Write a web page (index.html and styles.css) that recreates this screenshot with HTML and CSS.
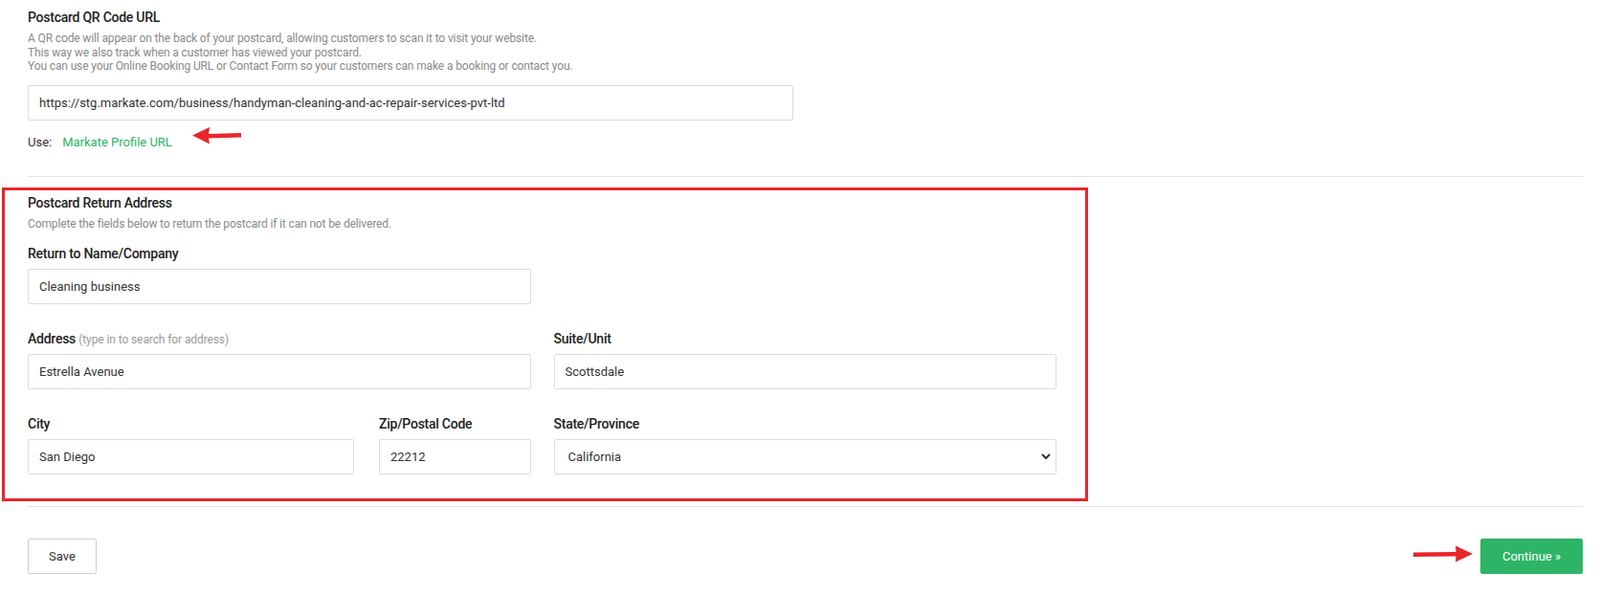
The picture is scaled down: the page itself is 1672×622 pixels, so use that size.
FILE: index.html
```html
<!DOCTYPE html>
<html lang="en">
<head>
<meta charset="utf-8">
<title>Postcard settings</title>
<link rel="stylesheet" href="styles.css">
</head>
<body>
<div class="page">
  <section class="qr">
    <div class="title">Postcard QR Code URL</div>
    <p class="desc">A QR code will appear on the back of your postcard, allowing customers to scan it to visit your website.<br>This way we also track when a customer has viewed your postcard.<br>You can use your Online Booking URL or Contact Form so your customers can make a booking or contact you.</p>
    <input class="field field-wide" type="text" value="https://stg.markate.com/business/handyman-cleaning-and-ac-repair-services-pvt-ltd">
    <div class="use">
      <span class="use-label">Use:</span>
      <a class="link" href="#">Markate Profile URL</a>
      <svg class="arrow arrow-left" width="52" height="20" viewBox="0 0 52 20"><path d="M0 9.5 L18 1 L17 8 L51 7 L51 11.5 L17 12.5 L18 18.5 Z" fill="#e8262b"/></svg>
    </div>
  </section>

  <hr class="divider">

  <section class="return-box">
    <div class="title">Postcard Return Address</div>
    <p class="desc">Complete the fields below to return the postcard if it can not be delivered.</p>
    <div class="form-grid">
      <div class="group">
        <label class="label">Return to Name/Company</label>
        <input class="field" type="text" value="Cleaning business">
      </div>
      <div></div>
      <div class="group">
        <label class="label">Address <span class="hint">(type in to search for address)</span></label>
        <input class="field" type="text" value="Estrella Avenue">
      </div>
      <div class="group">
        <label class="label">Suite/Unit</label>
        <input class="field" type="text" value="Scottsdale">
      </div>
      <div class="split">
        <div class="group">
          <label class="label">City</label>
          <input class="field" type="text" value="San Diego">
        </div>
        <div class="group">
          <label class="label">Zip/Postal Code</label>
          <input class="field" type="text" value="22212">
        </div>
      </div>
      <div class="group">
        <label class="label">State/Province</label>
        <div class="select-wrap">
          <select class="field select">
            <option>California</option>
          </select>
          <svg class="chevron" width="10" height="7" viewBox="0 0 10 7"><path d="M1 1.5 L5 5.5 L9 1.5" fill="none" stroke="#333" stroke-width="2"/></svg>
        </div>
      </div>
    </div>
  </section>

  <hr class="divider divider-bottom">

  <div class="actions">
    <button class="btn btn-save" type="button">Save</button>
    <div class="right">
      <svg class="arrow arrow-right" width="62" height="20" viewBox="0 0 62 20"><path d="M62 9 L44 0.5 L44.5 7 L0 7.5 L0 12 L44.5 11.5 L44 17.5 Z" fill="#e8262b"/></svg>
      <button class="btn btn-continue" type="button">Continue &raquo;</button>
    </div>
  </div>
</div>
</body>
</html>
```

FILE: styles.css
```css
body {
  margin: 0;
  background: #ffffff;
  color: #333333;
  font-family: Roboto, "Liberation Sans", Arial, sans-serif;
}

.page {
  padding: 10px 18px 0 29px;
}

.title {
  font-size: 14px;
  line-height: 17px;
  font-weight: 500;
  letter-spacing: -0.25px;
  color: #222222;
}

.desc {
  margin: 6px 0 0;
  font-size: 12px;
  line-height: 14.5px;
  letter-spacing: -0.13px;
  color: #8a8a8a;
}

.field {
  display: block;
  box-sizing: border-box;
  width: 100%;
  height: 37px;
  margin: 0;
  padding: 0 11px;
  border: 1px solid #dcdcdc;
  border-radius: 2px;
  background: #ffffff;
  font-family: Roboto, "Liberation Sans", Arial, sans-serif;
  font-size: 13px;
  color: #333333;
  outline: none;
}

.field-wide {
  width: 800px;
  margin-top: 12px;
}

.use {
  display: flex;
  align-items: flex-start;
  height: 17px;
  margin-top: 14px;
  font-size: 13px;
  line-height: 17px;
  color: #333333;
}

.use-label {
  margin-right: 11px;
}

.link {
  color: #2db466;
  text-decoration: none;
}

.arrow-left {
  margin: -8px 0 0 21px;
  flex: none;
}

.divider {
  height: 0;
  margin: 27px 0 0;
  border: 0;
  border-top: 1px solid #e4e4e4;
}

.return-box {
  width: 1075px;
  margin: 11px 0 0 -27px;
  padding: 5.5px 30px 25px 24px;
  border: 3px solid #e8262b;
}

.form-grid {
  display: grid;
  grid-template-columns: 1fr 1fr;
  column-gap: 24px;
  row-gap: 28px;
  margin-top: 15px;
}

.split {
  display: grid;
  grid-template-columns: 341px 1fr;
  column-gap: 26px;
}

.label {
  display: block;
  height: 17px;
  margin-bottom: 7px;
  font-size: 14px;
  line-height: 17px;
  font-weight: 500;
  letter-spacing: -0.25px;
  color: #222222;
}

.hint {
  font-size: 12px;
  line-height: 1;
  font-weight: 400;
  letter-spacing: -0.1px;
  color: #9a9a9a;
}

.select-wrap {
  position: relative;
}

.select {
  -webkit-appearance: none;
  appearance: none;
  padding-left: 14px;
}

.chevron {
  position: absolute;
  right: 6px;
  top: 50%;
  transform: translateY(-50%);
  pointer-events: none;
}

.divider-bottom {
  margin-top: 5px;
}

.actions {
  display: flex;
  justify-content: space-between;
  align-items: center;
  margin-top: 33px;
}

.right {
  display: flex;
  align-items: center;
  gap: 8px;
}

.arrow-right {
  margin-top: -3px;
}

.btn {
  box-sizing: border-box;
  height: 37px;
  border-radius: 2px;
  font-family: Roboto, "Liberation Sans", Arial, sans-serif;
  font-size: 13px;
  cursor: pointer;
}

.btn-save {
  width: 72px;
  background: #ffffff;
  border: 1px solid #cfcfcf;
  color: #333333;
}

.btn-continue {
  width: 107px;
  background: #2db466;
  border: 1px solid #2db466;
  color: #ffffff;
}
```
